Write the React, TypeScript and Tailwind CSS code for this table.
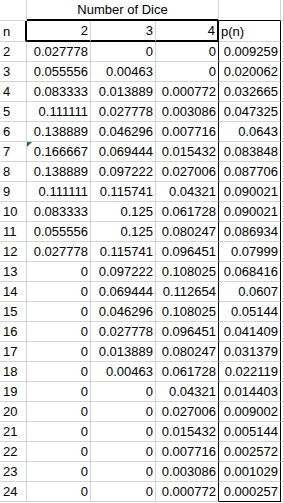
const ROWS: [string, string, string, string, string][] = [
  ['2', '0.027778', '0', '0', '0.009259'],
  ['3', '0.055556', '0.00463', '0', '0.020062'],
  ['4', '0.083333', '0.013889', '0.000772', '0.032665'],
  ['5', '0.111111', '0.027778', '0.003086', '0.047325'],
  ['6', '0.138889', '0.046296', '0.007716', '0.0643'],
  ['7', '0.166667', '0.069444', '0.015432', '0.083848'],
  ['8', '0.138889', '0.097222', '0.027006', '0.087706'],
  ['9', '0.111111', '0.115741', '0.04321', '0.090021'],
  ['10', '0.083333', '0.125', '0.061728', '0.090021'],
  ['11', '0.055556', '0.125', '0.080247', '0.086934'],
  ['12', '0.027778', '0.115741', '0.096451', '0.07999'],
  ['13', '0', '0.097222', '0.108025', '0.068416'],
  ['14', '0', '0.069444', '0.112654', '0.0607'],
  ['15', '0', '0.046296', '0.108025', '0.05144'],
  ['16', '0', '0.027778', '0.096451', '0.041409'],
  ['17', '0', '0.013889', '0.080247', '0.031379'],
  ['18', '0', '0.00463', '0.061728', '0.022119'],
  ['19', '0', '0', '0.04321', '0.014403'],
  ['20', '0', '0', '0.027006', '0.009002'],
  ['21', '0', '0', '0.015432', '0.005144'],
  ['22', '0', '0', '0.007716', '0.002572'],
  ['23', '0', '0', '0.003086', '0.001029'],
  ['24', '0', '0', '0.000772', '0.000257'],
];

const cell = 'flex items-end border-r border-b border-[#d4d4d4] pb-[1px] leading-[17px] whitespace-nowrap overflow-hidden';

export default function App() {
  return (
    <div
      className="w-[284px] h-[503px] overflow-hidden bg-white text-[13px] text-black"
      style={{ fontFamily: '"Liberation Sans", Arial, sans-serif' }}
    >
      <div className="grid grid-cols-[27px_64px_65px_63px_62px_1fr] grid-rows-[21px_21px] auto-rows-[20px]">
        {/* header row */}
        <div className={cell} />
        <div className={`${cell} col-span-3 justify-center border-b-2 border-b-black`}>Number of Dice</div>
        <div className={`${cell} border-b-black`} />
        <div className={cell} />

        {/* n row */}
        <div className={`${cell} pl-[3px] border-r-2 border-r-black`}>n</div>
        <div className={`${cell} justify-end pr-[2px] border-b-2 border-b-black`}>2</div>
        <div className={`${cell} justify-end pr-[2px] border-b-2 border-b-black`}>3</div>
        <div className={`${cell} justify-end pr-[2px] border-b-2 border-b-black border-r-2 border-r-black`}>4</div>
        <div className={`${cell} pl-[2px] border-r-black`}>p(n)</div>
        <div className={cell} />

        {ROWS.map((r, i) => {
          const last = i === ROWS.length - 1;
          return [
            <div key={`a${i}`} className={`${cell} pl-[3px]`}>{r[0]}</div>,
            <div key={`b${i}`} className={`${cell} relative justify-end pr-[2px]`}>
              {r[0] === '7' && (
                <span className="absolute left-0 top-0 h-0 w-0 border-t-[5px] border-r-[5px] border-t-[#1e7145] border-r-transparent" />
              )}
              {r[1]}
            </div>,
            <div key={`c${i}`} className={`${cell} justify-end pr-[2px]`}>{r[2]}</div>,
            <div key={`d${i}`} className={`${cell} justify-end pr-[2px] border-r-black`}>{r[3]}</div>,
            <div key={`e${i}`} className={`${cell} justify-end pr-[2px] border-r-black ${last ? 'border-b-black' : ''}`}>{r[4]}</div>,
            <div key={`f${i}`} className={cell} />,
          ];
        })}
      </div>
    </div>
  );
}
